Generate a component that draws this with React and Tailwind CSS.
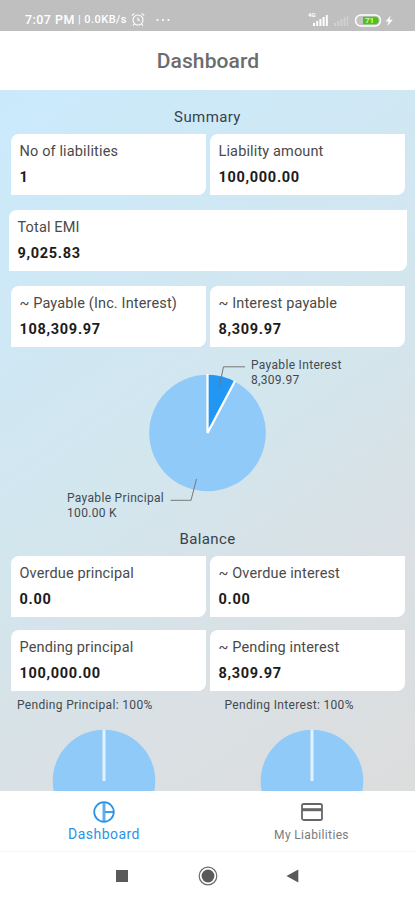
import React from 'react';

const summary = [
  { label: 'No of liabilities', value: '1' },
  { label: 'Liability amount', value: '100,000.00' },
];

const payable = [
  { label: '~ Payable (Inc. Interest)', value: '108,309.97' },
  { label: '~ Interest payable', value: '8,309.97' },
];

const overdue = [
  { label: 'Overdue principal', value: '0.00' },
  { label: '~ Overdue interest', value: '0.00' },
];

const pending = [
  { label: 'Pending principal', value: '100,000.00' },
  { label: '~ Pending interest', value: '8,309.97' },
];

function Card({ label, value }) {
  return (
    <div className="h-[61px] flex-1 rounded-tl-[8px] rounded-br-[8px] bg-white pl-[8.5px] pt-[8px]">
      <div className="text-[14.5px] leading-[20px] tracking-[0.14px] whitespace-nowrap text-[#4a4a4a]">{label}</div>
      <div className="mt-[6px] text-[14.5px] leading-[20px] font-bold tracking-[0.7px] text-[#1c1c1c]">{value}</div>
    </div>
  );
}

function CardRow({ items, className }) {
  return (
    <div className={`flex gap-[4px] pl-[11px] pr-[10px] ${className}`}>
      {items.map((item) => (
        <Card key={item.label} label={item.label} value={item.value} />
      ))}
    </div>
  );
}

function StatusBar() {
  return (
    <div className="flex h-[31px] shrink-0 items-center bg-[#bfbfbf] pl-[25px] pr-[21px] pt-[8px] text-white">
      <span className="w-[53px] text-[12.5px] leading-[16px] font-medium tracking-[0.45px] whitespace-nowrap">7:07 PM</span>
      <span className="w-[50px] text-[11px] leading-[16px] font-medium tracking-[0.45px] whitespace-nowrap">| 0.0KB/s</span>
      {/* Alarm */}
      <svg className="ml-[3px] h-[15px] w-[14px]" viewBox="0 0 14 15" fill="none" stroke="white" strokeWidth="1.1">
        <circle cx="7" cy="8" r="5" />
        <path d="M7 5.5V8.3H9M.8 3.6 3.4 1.3M13.2 3.6 10.6 1.3M3.4 12 2 13.6M10.6 12l1.4 1.6" />
      </svg>
      <svg className="ml-[11px] h-[4px] w-[14px]" viewBox="0 0 14 4" fill="white">
        <circle cx="1.5" cy="2" r="1.1" />
        <circle cx="7" cy="2" r="1.1" />
        <circle cx="12.5" cy="2" r="1.1" />
      </svg>
      {/* Signal, battery */}
      <svg className="ml-auto h-[16px] w-[86px]" viewBox="0 0 86 16">
        <g fill="white">
          <text x="0" y="5.4" fontSize="6" fontWeight="700">4G</text>
          <rect x="5" y="11" width="2" height="3" />
          <rect x="8.2" y="9" width="2" height="5" />
          <rect x="11.4" y="7" width="2" height="7" />
          <rect x="14.6" y="5" width="2" height="9" />
          <rect x="17.8" y="3" width="2" height="11" />
        </g>
        <g fill="#d0d0d0">
          <rect x="26" y="11" width="2" height="3" />
          <rect x="29.2" y="9" width="2" height="5" />
          <rect x="32.4" y="7" width="2" height="7" />
          <rect x="35.6" y="5" width="2" height="9" />
          <rect x="38.8" y="4" width="1.4" height="10" />
        </g>
        <rect x="47.5" y="3" width="25" height="11" rx="5.5" fill="#c4c4c4" stroke="white" strokeWidth="1.4" />
        <path d="M55 4.8h12a3.7 3.7 0 0 1 0 7.4H55z" fill="#4cc417" />
        <text x="57" y="11.4" fontSize="8" fontWeight="500" fill="#e3f8d8">71</text>
        <path d="M82.8 3.5 77.6 9.4h3.2l-1.6 4.8 5.6-6.4h-3.3z" fill="white" />
      </svg>
    </div>
  );
}

function PayableChart() {
  return (
    <svg className="mt-[3px] block h-[174px] w-[415px] shrink-0" viewBox="0 350 415 174">
      <circle cx="207.5" cy="433" r="58.3" fill="#90caf9" />
      <path d="M207.5 433V374.7A58.3 58.3 0 0 1 234.8 381.5Z" fill="#2196f3" />
      <path d="M207.5 374V433L235 381" fill="none" stroke="white" strokeWidth="2.3" />
      <path d="M219 388 223.5 366.8H245" fill="none" stroke="#777" strokeWidth="1" />
      <path d="M196.5 479 191 500.3H170.5" fill="none" stroke="#777" strokeWidth="1" />
      <g fontSize="12" fill="#424a50" letterSpacing="0.32">
        <text x="251" y="368.5">Payable Interest</text>
        <text x="251" y="383.5">8,309.97</text>
        <text x="67" y="501.7">Payable Principal</text>
        <text x="67" y="516.7">100.00 K</text>
      </g>
    </svg>
  );
}

function PendingTitle({ children }) {
  return (
    <div className="flex-1 pl-[17px] text-[12px] leading-[16px] tracking-[0.33px] whitespace-nowrap text-[#424a50]">
      {children}
    </div>
  );
}

function FullPie() {
  return (
    <svg className="h-[104px] w-[104px] shrink-0" viewBox="0 0 104 104">
      <circle cx="52" cy="52" r="51.3" fill="#90caf9" />
      <path d="M52 .5V52" stroke="#e3f2fd" strokeWidth="3" />
    </svg>
  );
}

function TabBar() {
  return (
    <nav className="flex h-[61px] shrink-0 border-b border-[#f4f4f4] bg-white">
      <div className="flex w-[208px] flex-col items-center pt-[9px] text-[#2b93e6]">
        <svg className="h-[24px] w-[24px]" viewBox="0 0 24 24" fill="none" stroke="currentColor" strokeWidth="1.8">
          <circle cx="12" cy="12" r="9.8" />
          <path d="M12 2v20" strokeWidth="3" opacity="0.75" />
          <path d="M13 12H22" />
        </svg>
        <span className="mt-px text-[14px] leading-[18px] tracking-[0.45px]">Dashboard</span>
      </div>
      <div className="flex w-[207px] flex-col items-center pt-[9px] text-[#666]">
        <svg className="h-[24px] w-[24px]" viewBox="0 0 24 24" fill="none" stroke="currentColor" strokeWidth="1.8">
          <rect x="2" y="4" width="20" height="16" rx="1.8" />
          <path d="M2 9.7h20" strokeWidth="3" />
        </svg>
        <span className="mt-[2px] text-[12px] leading-[18px] tracking-[0.35px] text-[#7b7b7b]">My Liabilities</span>
      </div>
    </nav>
  );
}

function SystemBar() {
  return (
    <div className="flex h-[48px] shrink-0 items-center gap-[73px] bg-white pl-[116px]">
      <div className="h-[12px] w-[12px] bg-[#5a5a5a]" />
      <svg className="-ml-[3px] h-[20px] w-[20px]" viewBox="0 0 20 20" fill="#5a5a5a">
        <circle cx="10" cy="10" r="6.4" />
        <circle cx="10" cy="10" r="8.8" fill="none" stroke="#6a6a6a" strokeWidth="1.2" />
      </svg>
      <svg className="-ml-[5px] h-[14px] w-[13px]" viewBox="0 0 13 14" fill="#5a5a5a">
        <path d="M.5 7 12.3.4v13.2z" />
      </svg>
    </div>
  );
}

function App() {
  return (
    <div className="flex h-[900px] w-[415px] flex-col overflow-hidden bg-white font-[Roboto,sans-serif]">
      <StatusBar />
      <header className="flex h-[59px] shrink-0 items-center justify-center bg-white pt-[3px] pl-px text-[21px] font-medium tracking-[0.1px] text-[#6c6c6c]">
        Dashboard
      </header>

      <main className="flex h-[701px] shrink-0 flex-col overflow-hidden bg-linear-[145deg,#caeafc_0%,#d3e6ee_48%,#dae0e4_75%,#dcdddd_100%]">
        <h2 className="mt-[17px] text-center text-[15px] leading-[20px] tracking-[0.4px] text-[#37424a]">Summary</h2>
        <CardRow items={summary} className="mt-[7px]" />
        <div className="mt-[15px] flex pl-[9px] pr-[8px]">
          <Card label="Total EMI" value="9,025.83" />
        </div>
        <CardRow items={payable} className="mt-[15px]" />

        <PayableChart />

        <h2 className="mt-[5px] text-center text-[15px] leading-[20px] tracking-[0.4px] text-[#37424a]">Balance</h2>
        <CardRow items={overdue} className="mt-[7px]" />
        <CardRow items={pending} className="mt-[13px]" />

        <div className="mt-[6px] flex">
          <PendingTitle>Pending Principal: 100%</PendingTitle>
          <PendingTitle>Pending Interest: 100%</PendingTitle>
        </div>
        <div className="mt-[16px] flex gap-[103.5px] pl-[52px]">
          <FullPie />
          <FullPie />
        </div>
      </main>

      <TabBar />
      <SystemBar />
    </div>
  );
}

export default App;
